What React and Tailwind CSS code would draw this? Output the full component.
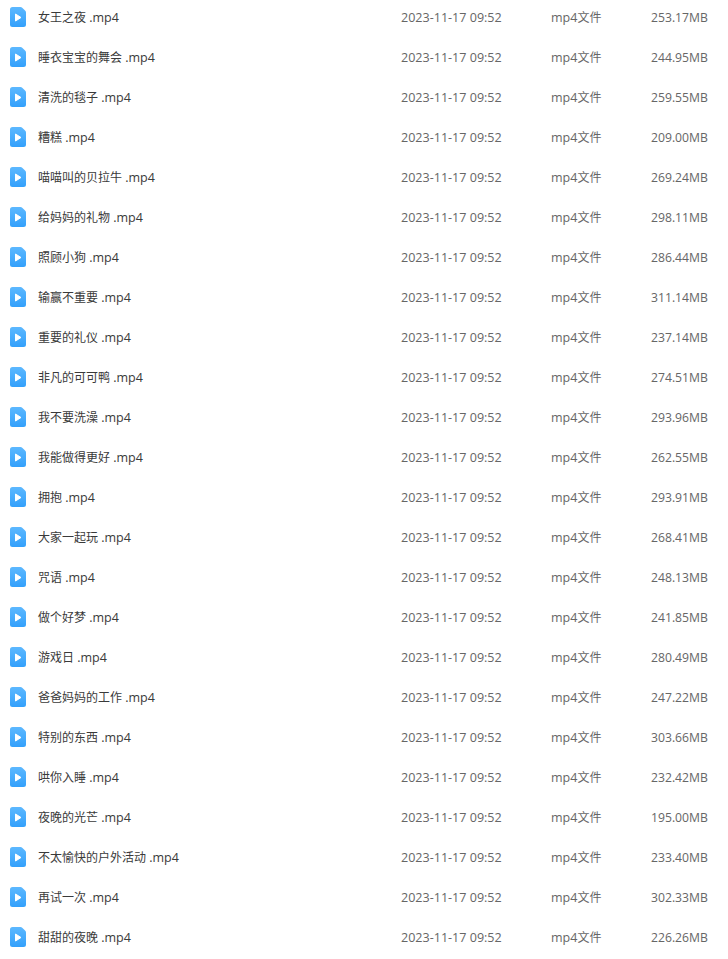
const files = [
  ["女王之夜", "253.17MB"],
  ["睡衣宝宝的舞会", "244.95MB"],
  ["清洗的毯子", "259.55MB"],
  ["糟糕", "209.00MB"],
  ["喵喵叫的贝拉牛", "269.24MB"],
  ["给妈妈的礼物", "298.11MB"],
  ["照顾小狗", "286.44MB"],
  ["输赢不重要", "311.14MB"],
  ["重要的礼仪", "237.14MB"],
  ["非凡的可可鸭", "274.51MB"],
  ["我不要洗澡", "293.96MB"],
  ["我能做得更好", "262.55MB"],
  ["拥抱", "293.91MB"],
  ["大家一起玩", "268.41MB"],
  ["咒语", "248.13MB"],
  ["做个好梦", "241.85MB"],
  ["游戏日", "280.49MB"],
  ["爸爸妈妈的工作", "247.22MB"],
  ["特别的东西", "303.66MB"],
  ["哄你入睡", "232.42MB"],
  ["夜晚的光芒", "195.00MB"],
  ["不太愉快的户外活动", "233.40MB"],
  ["再试一次", "302.33MB"],
  ["甜甜的夜晚", "226.26MB"],
];

const VideoIcon = () => (
  <svg width="16" height="20" viewBox="0 0 16 20" className="shrink-0 block">
    <defs>
      <linearGradient id="fileBlue" x1="0" y1="0" x2="0" y2="1">
        <stop offset="0" stopColor="#5cb8ff" />
        <stop offset="1" stopColor="#33a0fb" />
      </linearGradient>
    </defs>
    <path
      d="M2.5 0H10.5Q11.5 0 12.2 0.7L15.3 3.8Q16 4.5 16 5.5V17.5A2.5 2.5 0 0 1 13.5 20H2.5A2.5 2.5 0 0 1 0 17.5V2.5A2.5 2.5 0 0 1 2.5 0Z"
      fill="url(#fileBlue)"
    />
    <path d="M5.5 7L11 10.5L5.5 14Z" fill="#fff" stroke="#fff" strokeWidth="1" strokeLinejoin="round" />
  </svg>
);

export default function App() {
  return (
    <div
      className="w-[728px] h-[959px] overflow-hidden bg-white text-[12px]"
      style={{ fontFamily: '"Open Sans", "Noto Sans CJK SC", sans-serif' }}
    >
      <div className="-mt-[2px]">
        {files.map(([name, size]) => (
          <div key={name} className="flex items-center h-[40px]">
            <div className="w-[38px] pl-[10px] -mt-[2px]">
              <VideoIcon />
            </div>
            <div className="w-[363px] text-[#3a3a3a]">
              {name} <span className="text-[12.5px]">.mp4</span>
            </div>
            <div className="w-[150px] text-[12.56px] text-[#666]">2023-11-17 09:52</div>
            <div className="w-[100px] text-[#666]">
              <span className="text-[12.5px]">mp4</span>文件
            </div>
            <div className="text-[12.2px] text-[#666]">{size}</div>
          </div>
        ))}
      </div>
    </div>
  );
}
